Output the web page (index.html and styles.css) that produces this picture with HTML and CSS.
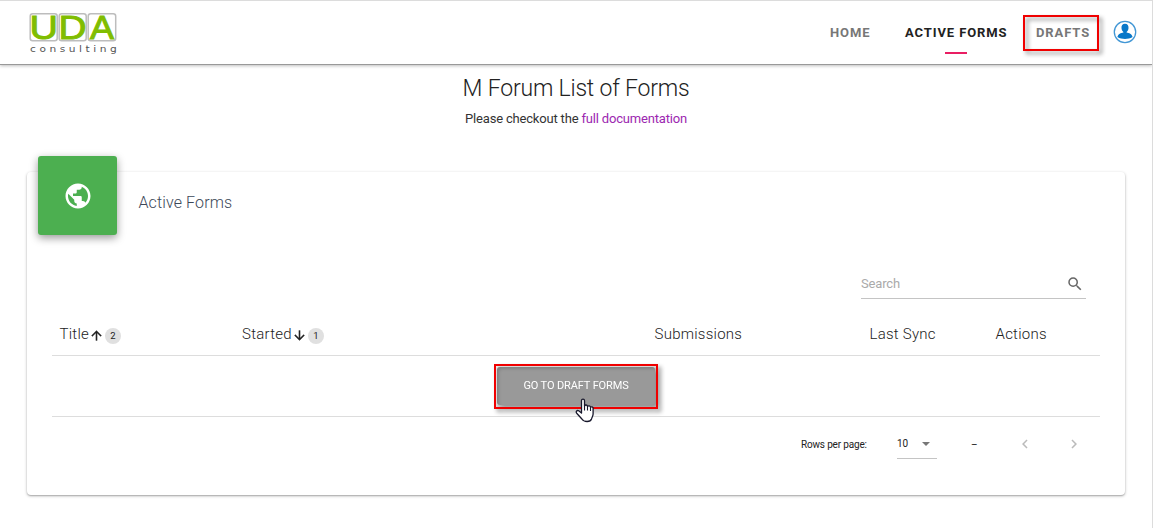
FILE: index.html
```html
<!DOCTYPE html>
<html lang="en">
<head>
<meta charset="utf-8">
<title>M Forum List of Forms</title>
<link rel="stylesheet" href="styles.css">
</head>
<body>
<div class="page">
  <header class="header">
    <svg class="logo" width="90" height="44" viewBox="0 0 90 44">
      <g fill="#fff" stroke="#bdbdbd" stroke-width="1.500">
        <rect x="1.200" y="1.700" width="27" height="27" rx="2.500"/>
        <rect x="30.200" y="1.700" width="27" height="27" rx="2.500"/>
        <rect x="59.200" y="1.700" width="27.500" height="27" rx="2.500"/>
      </g>
      <g class="logo-name">
        <text x="0.500" y="26.500" textLength="28.500" lengthAdjust="spacingAndGlyphs">U</text>
        <text x="29.500" y="26.500" textLength="28" lengthAdjust="spacingAndGlyphs">D</text>
        <text x="61" y="26.500" textLength="24" lengthAdjust="spacingAndGlyphs">A</text>
      </g>
      <g transform="translate(1 39.500) scale(1.250 1)"><text class="logo-sub" textLength="69.500">consulting</text></g>
    </svg>
    <nav class="nav">
      <a class="nav-home">HOME</a>
      <a class="nav-active">ACTIVE FORMS</a>
      <a class="nav-drafts">DRAFTS</a>
    </nav>
    <svg class="avatar" width="24" height="24" viewBox="0 0 24 24">
      <circle cx="12" cy="12" r="10.700" fill="#fff" stroke="#4297d5" stroke-width="1.300"/>
      <path fill="#0878c9" d="M12 3.800C9.500 3.800 8.200 5.700 8.500 8.200c.2 1.800.9 3 1.900 3.800v.6c-2.500.6-5.200 1.400-6 4.500C6.600 18.800 9.600 19 12 19s5.400-.2 7.600-1.900c-.8-3.100-3.500-3.900-6-4.500V12c1-.8 1.700-2 1.900-3.800.3-2.500-1-4.400-3.500-4.400z"/>
    </svg>
  </header>
  <section class="intro">
    <h1>M Forum List of Forms</h1>
    <p>Please checkout the <a>full documentation</a></p>
  </section>
  <main class="card">
    <div class="card-head">
      <div class="tile">
        <svg width="30" height="30" viewBox="0 0 24 24" fill="#fff"><path d="M12 2C6.480 2 2 6.480 2 12s4.480 10 10 10 10-4.480 10-10S17.520 2 12 2zm-1 17.930c-3.950-.49-7-3.850-7-7.930 0-.62.080-1.210.210-1.790L9 15v1c0 1.100.9 2 2 2v1.930zm6.900-2.540c-.26-.81-1-1.390-1.900-1.390h-1v-3c0-.55-.45-1-1-1H8v-2h2c.55 0 1-.45 1-1V7h2c1.100 0 2-.9 2-2v-.41c2.930 1.190 5 4.060 5 7.410 0 2.080-.8 3.970-2.100 5.390z"/></svg>
      </div>
      <h2>Active Forms</h2>
    </div>
    <div class="search">
      <span>Search</span>
      <svg width="18" height="18" viewBox="0 0 24 24" fill="#666"><path d="M15.500 14h-.79l-.28-.27A6.471 6.471 0 0 0 16 9.500 6.500 6.500 0 1 0 9.500 16c1.610 0 3.090-.59 4.230-1.570l.27.28v.79l5 4.990L20.490 19l-4.990-5zm-6 0C7.010 14 5 11.990 5 9.500S7.010 5 9.500 5 14 7.010 14 9.500 11.990 14 9.500 14z"/></svg>
    </div>
    <div class="table">
      <div class="thead">
        <div>Title<svg class="sort" viewBox="0 0 24 24"><path d="M4 12l1.410 1.410L11 7.830V20h2V7.830l5.580 5.590L20 12l-8-8-8 8z"/></svg><span class="badge">2</span></div>
        <div>Started<svg class="sort" viewBox="0 0 24 24"><path d="M20 12l-1.410-1.410L13 16.170V4h-2v12.170l-5.580-5.590L4 12l8 8 8-8z"/></svg><span class="badge">1</span></div>
        <div>Submissions</div>
        <div>Last Sync</div>
        <div>Actions</div>
      </div>
      <div class="empty">
        <div class="action">
          <div class="frame frame-button"><button>GO TO DRAFT FORMS</button></div>
          <svg class="cursor" width="20" height="26" viewBox="0 0 20 26"><path fill="#fff" stroke="#17172b" stroke-width="1.300" stroke-linejoin="round" d="M6.500 15V2.700C6.500 .5 9.500 .5 9.500 2.700V8C10 6.500 12.500 6.700 12.500 8.500c.8-1.200 3-.8 3 .8.900-.9 2.600-.4 2.600 1.200V16c0 2-1.100 3.100-1.600 5-.5 1.700-2 2.500-4.400 2.500S7.900 22.700 6.900 21L1.700 15.200C.4 13.500 2.200 12 3.700 12.800z"/><path fill="none" stroke="#17172b" stroke-width="1.100" d="M9.500 8v4.500M12.500 8.500v4M15.500 9.500v3.500"/></svg>
        </div>
      </div>
    </div>
    <div class="pager">
      <span class="rows">Rows per page:</span>
      <span class="select">10<i></i></span>
      <span class="range">–</span>
      <svg class="prev" viewBox="0 0 24 24"><path d="M15.410 7.410L14 6l-6 6 6 6 1.410-1.410L10.830 12z"/></svg>
      <svg class="next" viewBox="0 0 24 24"><path d="M10 6L8.590 7.410 13.170 12l-4.580 4.590L10 18l6-6z"/></svg>
    </div>
  </main>
  <div class="frame frame-drafts"></div>
</div>
</body>
</html>
```
FILE: styles.css
```css
* { box-sizing: border-box; }
body { margin: 0; font-family: Roboto, sans-serif; background: #fff; color: #222; }
.page { position: relative; width: 1153px; height: 528px; overflow: hidden; border-top: 1px solid #dcdcdc; border-right: 1px solid #dcdcdc; }
.header { height: 64px; display: flex; align-items: flex-start; border-bottom: 1px solid #999; box-shadow: 0 1px 3px rgba(0,0,0,.25); padding: 11px 15px 0 29px; }
.logo { overflow: visible; }
.logo-name { font: 400 33px "Liberation Sans", sans-serif; fill: #80bd01; stroke: #80bd01; stroke-width: 1; }
.logo-sub { font: 400 8.500px "DejaVu Sans", sans-serif; fill: #555; }
.nav { margin-left: auto; display: flex; font-size: 13px; font-weight: 700; letter-spacing: .9px; color: #777; line-height: 16px; padding-top: 13px; }
.nav-home { width: 75px; }
.nav-active { width: 131px; color: #222; }
.nav-active::after { content: ""; display: block; width: 22px; height: 2px; margin: 11px 0 0 40px; background: #e91e63; }
.nav-drafts { width: 77px; }
.nav { margin-right: 0; }
.avatar { margin-top: 8px; margin-right: 0; }
.frame { border: 2px solid #f00000; filter: drop-shadow(3px 3px 2px rgba(0,0,0,.45)); }
.frame-drafts { position: absolute; left: 1023px; top: 14px; width: 76px; height: 36px; }
.intro { text-align: center; height: 107px; padding-top: 8px; font-weight: 300; }
h1 { margin: 0; font-size: 23px; line-height: 32px; font-weight: 300; letter-spacing: -.2px; }
.intro p { margin: 5px 0 0; font-size: 13px; line-height: 18px; font-weight: 400; letter-spacing: -.18px; color: #333; }
.intro a { color: #9c27b0; }
.card { width: 1098px; height: 323px; margin-left: 27px; border-radius: 4px; box-shadow: 0 1px 3px rgba(0,0,0,.3), 0 1px 1px rgba(0,0,0,.12); padding: 0 25px; display: flex; flex-direction: column; }
.card-head { height: 91px; display: flex; margin-left: -14px; }
.tile { width: 79px; height: 79px; margin-top: -16px; border-radius: 3px; background: #4caf50; display: flex; align-items: center; justify-content: center; box-shadow: 0 3px 8px rgba(0,0,0,.4); }
h2 { margin: 19px 0 0 21.500px; font-size: 16px; line-height: 24px; font-weight: 300; color: #3c4858; letter-spacing: .12px; }
.search { align-self: flex-end; width: 225px; height: 36px; margin-right: 14px; border-bottom: 1px solid #c4c4c4; display: flex; align-items: center; justify-content: space-between; font-size: 13px; color: #aaa; padding: 5px 2px 0 0; letter-spacing: -.15px; }
.search svg { margin: 2px 0 0; }
.table { margin-top: 14px; }
.thead { height: 43px; display: grid; grid-template-columns: 182.500px 412.500px 215px 126px auto; padding-left: 7.500px; border-bottom: 1px solid #ddd; font-size: 15px; line-height: 42px; font-weight: 300; letter-spacing: .25px; }
.thead div { display: flex; align-items: center; }
.sort { width: 15px; height: 15px; margin: 2px 0 0 0; fill: #222; stroke: #222; stroke-width: .5; }
.badge { width: 16px; height: 16px; line-height: 16px; border-radius: 8px; margin: 3px 0 0 1px; background: #e0e0e0; font-size: 9.500px; font-weight: 400; letter-spacing: 0; text-align: center; }
.empty { height: 61px; border-bottom: 1px solid #ddd; display: flex; justify-content: center; padding-top: 8px; }
.action { position: relative; }
.frame-button { width: 164px; height: 45px; padding: 1px; }
.frame-button button { display: block; width: 158px; height: 38px; border: 0; border-radius: 3px; background: #999; box-shadow: inset 2px 2px 3px rgba(0,0,0,.16); color: #fff; font: 400 11px/38px Roboto, sans-serif; letter-spacing: -.12px; padding: 0; }
.cursor { position: absolute; left: 81px; top: 34px; }
.pager { display: flex; align-items: center; height: 54px; font-size: 10px; padding-left: 749px; }
.rows { width: 96px; letter-spacing: -.17px; }
.select { width: 40px; height: 30px; line-height: 30px; border-bottom: 1px solid #c4c4c4; display: flex; align-items: center; justify-content: space-between; padding-right: 7px; font-size: 10px; }
.select i { border: 4px solid transparent; border-top-color: #777; border-bottom: 0; }
.range { margin-left: 34px; width: 10px; }
.prev, .next { width: 18px; height: 18px; fill: #bbb; }
.prev { margin-left: 35px; }
.next { margin-left: 31px; }
```
